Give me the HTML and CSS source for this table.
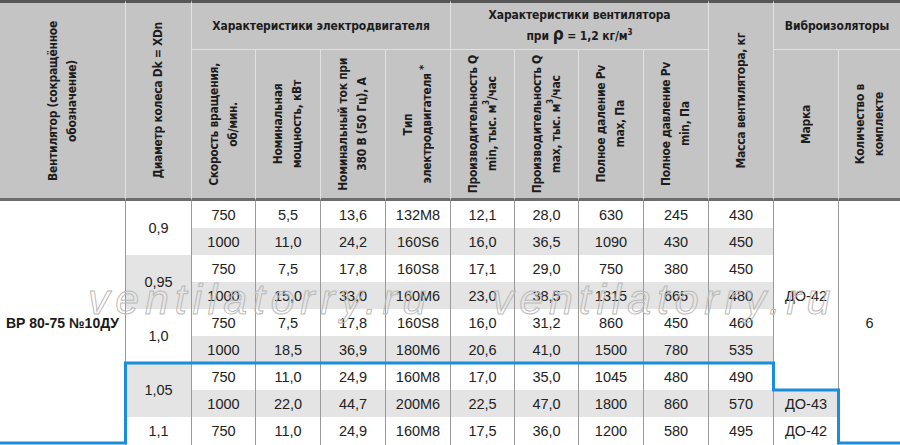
FILE: index.html
```html
<!DOCTYPE html>
<html lang="ru">
<head>
<meta charset="utf-8">
<title>ВР 80-75 №10ДУ</title>
<link rel="stylesheet" href="styles.css">
</head>
<body>
<div class="sheet">
<table class="spec">
<colgroup>
<col class="w126"><col class="w66"><col class="w64"><col class="w65"><col class="w65"><col class="w65"><col class="w64"><col class="w64"><col class="w65"><col class="w65"><col class="w65"><col class="w65"><col class="w61">
</colgroup>
<thead>
<tr class="h1">
<th rowspan="2" class="rot full"><span>Вентилятор (сокращённое<br>обозначение)</span></th>
<th rowspan="2" class="rot full"><span>Диаметр колеса Dk = XDn</span></th>
<th colspan="4" class="grp">Характеристики электродвигателя</th>
<th colspan="4" class="grp grp2">Характеристики вентилятора<br>при <span class="rho">ρ</span> = 1,2 кг/м<sup>3</sup></th>
<th rowspan="2" class="rot full"><span>Масса вентилятора, кг</span></th>
<th colspan="2" class="grp last">Виброизоляторы</th>
</tr>
<tr class="h2">
<th class="rot"><span>Скорость вращения,<br>об/мин.</span></th>
<th class="rot"><span>Номинальная<br>мощность, кВт</span></th>
<th class="rot"><span>Номинальный ток при<br>380 В (50 Гц), А</span></th>
<th class="rot"><span>Тип<br>электродвигателя <sup class="ast">*</sup></span></th>
<th class="rot"><span>Производительность Q<br>min, тыс. м<sup>3</sup>/час</span></th>
<th class="rot"><span>Производительность Q<br>max, тыс. м<sup>3</sup>/час</span></th>
<th class="rot"><span>Полное даление Pv<br>max, Па</span></th>
<th class="rot"><span>Полное давление Pv<br>min, Па</span></th>
<th class="rot"><span>Марка</span></th>
<th class="rot last"><span>Количество в<br>комплекте</span></th>
</tr>
</thead>
<tbody>
<tr>
<td rowspan="9" class="name">ВР 80-75 №10ДУ</td>
<td rowspan="2">0,9</td>
<td>750</td><td>5,5</td><td>13,6</td><td>132M8</td><td>12,1</td><td>28,0</td><td>630</td><td>245</td><td>430</td>
<td rowspan="7">ДО-42</td>
<td rowspan="9" class="last">6</td>
</tr>
<tr class="alt">
<td>1000</td><td>11,0</td><td>24,2</td><td>160S6</td><td>16,0</td><td>36,5</td><td>1090</td><td>430</td><td>450</td>
</tr>
<tr>
<td rowspan="2" class="gr">0,95</td>
<td>750</td><td>7,5</td><td>17,8</td><td>160S8</td><td>17,1</td><td>29,0</td><td>750</td><td>380</td><td>450</td>
</tr>
<tr class="alt">
<td>1000</td><td>15,0</td><td>33,0</td><td>160M6</td><td>23,0</td><td>38,5</td><td>1315</td><td>665</td><td>480</td>
</tr>
<tr>
<td rowspan="2">1,0</td>
<td>750</td><td>7,5</td><td>17,8</td><td>160S8</td><td>16,0</td><td>31,2</td><td>860</td><td>450</td><td>460</td>
</tr>
<tr class="alt">
<td>1000</td><td>18,5</td><td>36,9</td><td>180M6</td><td>20,6</td><td>41,0</td><td>1500</td><td>780</td><td>535</td>
</tr>
<tr>
<td rowspan="2" class="gr">1,05</td>
<td>750</td><td>11,0</td><td>24,9</td><td>160M8</td><td>17,0</td><td>35,0</td><td>1045</td><td>480</td><td>490</td>
</tr>
<tr class="alt">
<td>1000</td><td>22,0</td><td>44,7</td><td>200M6</td><td>22,5</td><td>47,0</td><td>1800</td><td>860</td><td>570</td><td>ДО-43</td>
</tr>
<tr class="lastrow">
<td>1,1</td>
<td>750</td><td>11,0</td><td>24,9</td><td>160M8</td><td>17,5</td><td>36,0</td><td>1200</td><td>580</td><td>495</td><td>ДО-42</td>
</tr>
</tbody>
</table>
<div class="wm wm1">ventilatorry.ru</div>
<div class="wm wm2">ventilatorry.ru</div>
<svg class="outline" width="900" height="445" viewBox="0 0 900 445">
<polyline points="0,443 125.5,443 125.5,363 773.5,363 773.5,390 838.5,390 838.5,443 900,443" fill="none" stroke="#1a8ddc" stroke-width="3"/>
</svg>
</div>
</body>
</html>
```

FILE: styles.css
```css
html, body {
  margin: 0;
  padding: 0;
  background: #ffffff;
}

.sheet {
  position: relative;
  width: 900px;
  height: 445px;
  overflow: hidden;
}

.spec {
  border-collapse: separate;
  border-spacing: 0;
  table-layout: fixed;
  width: 900px;
}

.w126 { width: 126px; }
.w66 { width: 66px; }
.w64 { width: 64px; }
.w65 { width: 65px; }
.w61 { width: 61px; }

th {
  background: #c4c4c4;
  color: #1c1c1c;
  font-family: "DejaVu Sans Condensed", "DejaVu Sans", sans-serif;
  font-stretch: condensed;
  font-weight: bold;
  font-size: 12px;
  line-height: 19px;
  padding: 0;
  border-right: 1px solid #e2e2e2;
  text-align: center;
  vertical-align: middle;
  overflow: hidden;
}

th.last, td.last {
  border-right: none;
}

tr.h1 { height: 50px; }
tr.h2 { height: 151px; }

tr.h1 th {
  border-top: 3px solid #575757;
}

th.grp {
  border-bottom: 1px solid #e2e2e2;
  letter-spacing: -0.1px;
}

th.full,
tr.h2 th {
  border-bottom: 3px solid #6c6c6c;
}

.rho {
  font-size: 17px;
  font-family: "DejaVu Sans", sans-serif;
  font-weight: bold;
}

sup {
  font-size: 8px;
  line-height: 0;
  vertical-align: 5px;
}

.ast {
  font-size: 11px;
  vertical-align: 3px;
}

th.rot {
  line-height: 0;
}

th.rot span {
  display: inline-block;
  writing-mode: vertical-rl;
  transform: rotate(180deg);
  line-height: 19px;
  vertical-align: middle;
  text-align: center;
  letter-spacing: -0.3px;
}

tbody tr { height: 27px; }
tbody tr.lastrow { height: 28px; }

td {
  font-family: "Liberation Sans", Arial, sans-serif;
  font-size: 14.5px;
  color: #222222;
  text-align: center;
  vertical-align: middle;
  padding: 0;
  border-right: 1px solid #9a9a9a;
  background: #ffffff;
}

tr.alt td {
  background: #e4e4e4;
}

td.gr {
  background: #e4e4e4;
}

td.name {
  font-weight: bold;
  font-size: 14px;
  color: #1a1a1a;
}

.wm {
  position: absolute;
  top: 278px;
  font-family: "Liberation Sans", Arial, sans-serif;
  font-style: italic;
  font-size: 43px;
  line-height: 43px;
  letter-spacing: 5.8px;
  color: transparent;
  -webkit-text-stroke: 1px #bababa;
  white-space: nowrap;
  pointer-events: none;
}

.wm1 { left: 88px; }
.wm2 { left: 492px; }

.outline {
  position: absolute;
  left: 0;
  top: 0;
  pointer-events: none;
}
```
